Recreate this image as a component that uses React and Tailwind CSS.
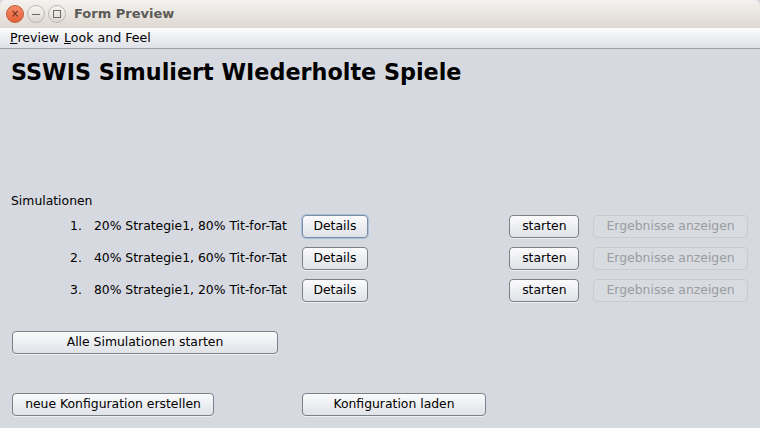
import React from "react";

const F = { fontFamily: '"DejaVu Sans", sans-serif' };

function Btn({ children, className = "", disabled = false, focused = false }) {
  return (
    <div
      className={
        "flex h-[23px] items-center justify-center rounded-[4px] border text-[12.4px] " +
        (disabled
          ? "border-[#c8cbd1] bg-[#d8dbe0] text-[#9a9ca0] "
          : focused
          ? "border-[#7c8fa8] bg-gradient-to-b from-[#fbfbfc] to-[#dfe2e7] text-black shadow-[0_0_0_1px_#a9c0dd] "
          : "border-[#7d8087] bg-gradient-to-b from-[#fbfbfc] to-[#dfe2e7] text-black shadow-[0_1px_0_#eef0f3] ") +
        className
      }
    >
      {children}
    </div>
  );
}

function Row({ n, text, focused }) {
  return (
    <div className="flex h-[23px] items-center">
      <div className="w-[70px] text-right text-[12.4px] text-black">{n}</div>
      <div className="ml-[12px] w-[208px] text-[12.4px] text-black">{text}</div>
      <Btn className="w-[67px]" focused={focused}>Details</Btn>
      <Btn className="ml-[141px] w-[70px]">starten</Btn>
      <Btn className="ml-[14px] w-[155px]" disabled>Ergebnisse anzeigen</Btn>
    </div>
  );
}

export default function App() {
  return (
    <div className="flex h-[428px] w-[760px] flex-col overflow-hidden bg-[#d6d9df]" style={F}>
      <div className="flex h-[28px] items-center rounded-t-[6px] bg-gradient-to-b from-[#f4f2ef] to-[#dfd8d1] pl-[6px]">
        <div className="flex h-[18px] w-[18px] items-center justify-center rounded-full border border-[#c45a3b] bg-gradient-to-b from-[#f58a67] to-[#e45f35] text-[10px] leading-none text-[#5a2a1a]">
          ×
        </div>
        <div className="ml-[3px] flex h-[18px] w-[18px] items-center justify-center rounded-full border border-[#bdb8b1] bg-gradient-to-b from-[#f7f5f2] to-[#dcd7d0]">
          <div className="h-[1px] w-[8px] bg-[#6c6a66]" />
        </div>
        <div className="ml-[3px] flex h-[18px] w-[18px] items-center justify-center rounded-full border border-[#bdb8b1] bg-gradient-to-b from-[#f7f5f2] to-[#dcd7d0]">
          <div className="h-[8px] w-[8px] border border-[#6c6a66]" />
        </div>
        <div className="ml-[8px] text-[13px] font-bold text-[#5d5b57]">Form Preview</div>
      </div>
      <div className="flex h-[21px] items-center border-b border-[#9ea1a7] bg-gradient-to-b from-[#fbfcfd] to-[#dfe1e7] pl-[10px] text-[12.6px] text-black">
        <span><span className="underline underline-offset-1">P</span>review</span>
        <span className="ml-[5px]"><span className="underline underline-offset-1">L</span>ook and Feel</span>
      </div>
      <div className="flex flex-col px-[12px]">
        <div className="mt-[10px] ml-[-1px] text-[22.3px] font-bold leading-[27px] text-black">
          SSWIS Simuliert WIederholte Spiele
        </div>
        <div className="mt-[107px] ml-[-1px] text-[12.4px] leading-[16px] text-black">Simulationen</div>
        <div className="mt-[6px] flex flex-col gap-[9px]">
          <Row n="1." text="20% Strategie1, 80% Tit-for-Tat" focused />
          <Row n="2." text="40% Strategie1, 60% Tit-for-Tat" />
          <Row n="3." text="80% Strategie1, 20% Tit-for-Tat" />
        </div>
        <Btn className="mt-[29px] w-[266px]">Alle Simulationen starten</Btn>
        <div className="mt-[39px] flex">
          <Btn className="w-[202px]">neue Konfiguration erstellen</Btn>
          <Btn className="ml-[88px] w-[184px]">Konfiguration laden</Btn>
        </div>
      </div>
    </div>
  );
}
